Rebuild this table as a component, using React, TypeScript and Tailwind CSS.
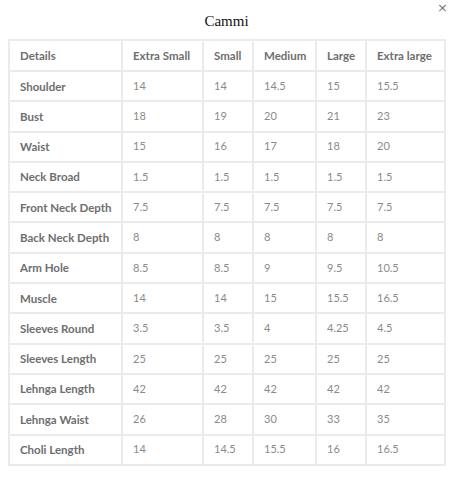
import React from "react";

const headers = ["Details", "Extra Small", "Small", "Medium", "Large", "Extra large"];
const rows: string[][] = [
  ["Shoulder", "14", "14", "14.5", "15", "15.5"],
  ["Bust", "18", "19", "20", "21", "23"],
  ["Waist", "15", "16", "17", "18", "20"],
  ["Neck Broad", "1.5", "1.5", "1.5", "1.5", "1.5"],
  ["Front Neck Depth", "7.5", "7.5", "7.5", "7.5", "7.5"],
  ["Back Neck Depth", "8", "8", "8", "8", "8"],
  ["Arm Hole", "8.5", "8.5", "9", "9.5", "10.5"],
  ["Muscle", "14", "14", "15", "15.5", "16.5"],
  ["Sleeves Round", "3.5", "3.5", "4", "4.25", "4.5"],
  ["Sleeves Length", "25", "25", "25", "25", "25"],
  ["Lehnga Length", "42", "42", "42", "42", "42"],
  ["Lehnga Waist", "26", "28", "30", "33", "35"],
  ["Choli Length", "14", "14.5", "15.5", "16", "16.5"],
];
const widths = [113, 81, 50, 63, 50, 79];

export default function App() {
  return (
    <div className="relative w-[453px] h-[478px] bg-white overflow-hidden">
      <div className="absolute right-[4px] top-0 text-[13px] text-[#777] font-['DejaVu_Sans',sans-serif] leading-[16px] px-[1px]">×</div>
      <h2 className="pt-[12px] h-[39px] text-center text-[15px] leading-[18px] text-[#111] font-['Liberation_Serif',serif]">
        Cammi
      </h2>
      <table className="ml-[8px] w-[436px] table-fixed border-collapse font-['Lato',sans-serif] text-[11px]">
        <colgroup>
          {widths.map((w, i) => (
            <col key={i} style={{ width: w }} />
          ))}
        </colgroup>
        <thead>
          <tr className="h-[31px]">
            {headers.map((h) => (
              <th key={h} className="border-2 border-[#ebebeb] pl-[10px] text-left text-[11.5px] font-bold text-[#6e6e6e] align-middle">
                {h}
              </th>
            ))}
          </tr>
        </thead>
        <tbody>
          {rows.map((r) => (
            <tr key={r[0]} className="h-[30.3px]">
              {r.map((c, i) => (
                <td
                  key={i}
                  className={
                    "border-2 border-[#ebebeb] pl-[10px] align-middle " +
                    (i === 0 ? "text-[11.5px] font-bold text-[#6e6e6e]" : "text-[#8a8a8a]")
                  }
                >
                  {c}
                </td>
              ))}
            </tr>
          ))}
        </tbody>
      </table>
    </div>
  );
}
